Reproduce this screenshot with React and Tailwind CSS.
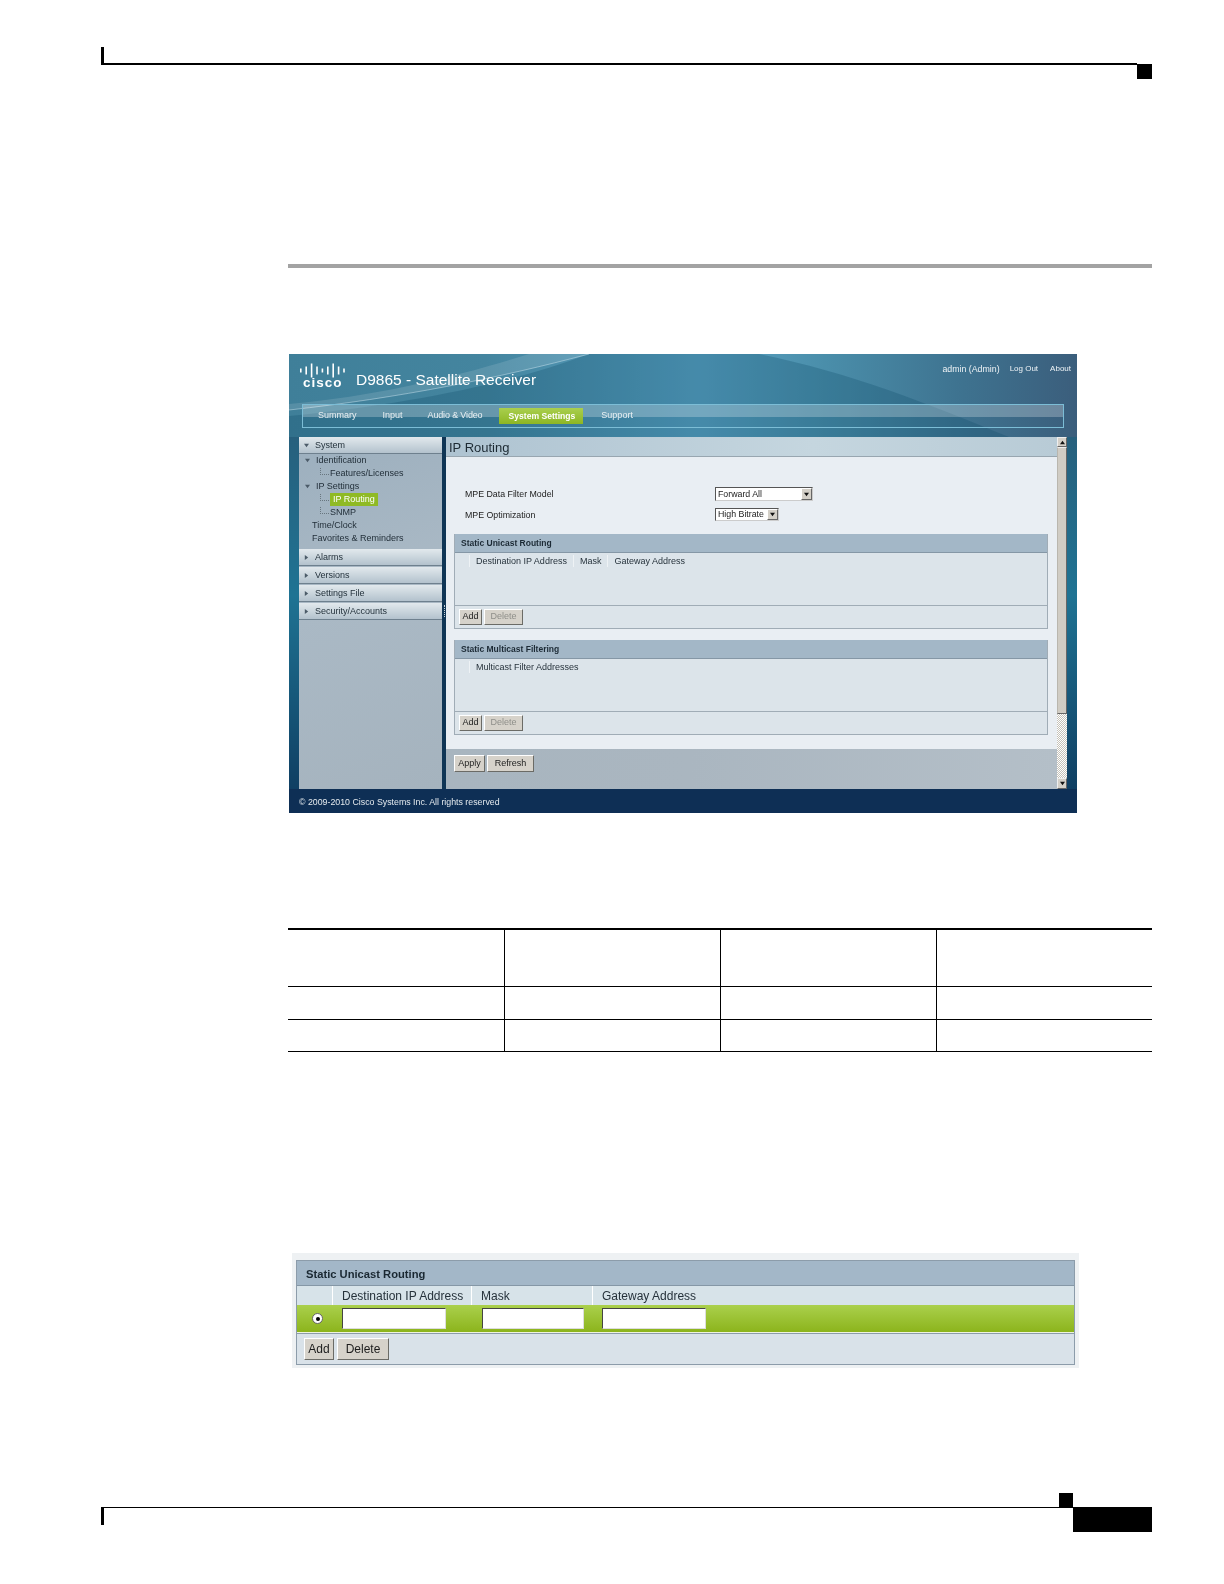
const navItems = ['Summary', 'Input', 'Audio & Video', 'System Settings', 'Support']

function Arrow({ dir = 'down', color = '#4b5b68', size = 5 }) {
  return (
    <svg width={size} height={size} viewBox="0 0 6 6" className="shrink-0">
      <path d={dir === 'down' ? 'M0 1h6L3 5z' : dir === 'up' ? 'M0 5h6L3 1z' : 'M1 0v6l4-3z'} fill={color} />
    </svg>
  )
}

function CiscoLogo() {
  const bars = [4, 8, 14, 8, 4, 8, 14, 8, 4]
  return (
    <div className="flex flex-col items-start">
      <svg width="46" height="15" viewBox="0 0 46 15">
        {bars.map((h, i) => (
          <rect key={i} x={i * 5.4 + 1} y={7.5 - h / 2} width="1.6" height={h} fill="#fff" />
        ))}
      </svg>
      <span className="ml-[4px] -mt-px text-[13.5px] leading-[12px] font-bold tracking-[1px] text-white">cisco</span>
    </div>
  )
}

function Banner() {
  return (
    <div className="relative h-[83px] overflow-hidden bg-[linear-gradient(90deg,#3f7f99_0%,#44859f_25%,#5ba3c4_52%,#4a8eaa_68%,#3e7390_85%,#3b5e7c_100%)]">
      {/* swoosh */}
      <svg className="absolute inset-0" width="788" height="83" viewBox="0 0 788 83">
        <path d="M0 83V62C120 50 220 30 300 0H470C560 18 640 50 720 83Z" fill="#0f4a68" opacity="0.28" />
        <path d="M0 56C110 44 210 24 300 0L240 0C170 22 90 42 0 50Z" fill="#fff" opacity="0.12" />
        <path d="M0 56C110 44 210 24 300 0" fill="none" stroke="#cfe6f0" strokeWidth="0.8" opacity="0.6" />
      </svg>
      <div className="relative flex h-[50px]">
        <div className="w-[67px] pl-[10px] pt-[9px]">
          <CiscoLogo />
        </div>
        <div className="flex-1 pt-[16px] text-[15.5px] leading-[20px] text-white">D9865 - Satellite Receiver</div>
        <div className="flex pr-[6px] pt-[9px] text-[8px] leading-[12px] text-[#eef3f6]">
          <span className="mr-[10px] text-[8.8px]">admin (Admin)</span>
          <span className="mr-[12px]">Log Out</span>
          <span>About</span>
        </div>
      </div>
      <nav className="relative ml-[13px] flex h-[24px] w-[762px] items-center gap-[6px] border border-[#7cbdd6] pl-[5px]">
        <div className="absolute inset-x-0 top-0 h-[12px] bg-white/25" />
        {navItems.map((item) => (
          <span
            key={item}
            className={`relative flex h-[16px] items-center ${
              item === 'System Settings'
                ? 'ml-px mr-[2px] bg-[linear-gradient(180deg,#a9cf4e,#8db624)] pl-[9px] pr-[8px] text-[8.6px] font-bold text-white'
                : item === 'Audio & Video'
                  ? '-ml-px px-[10px] text-[9px] tracking-[-0.15px] text-[#e9f0f3]'
                  : 'px-[10px] text-[9px] text-[#e9f0f3]'
            }`}
          >
            {item}
          </span>
        ))}
      </nav>
    </div>
  )
}

function SideHeader({ label, open }) {
  return (
    <div className="mb-px flex h-[17px] items-center gap-[6px] border-b border-[#6e808e] bg-[linear-gradient(180deg,#e2e9ed,#b3c2cd)] pl-[5px] pt-px text-[9px] text-[#24323c]">
      <Arrow dir={open ? 'down' : 'right'} />
      <span>{label}</span>
    </div>
  )
}

function TreeRow({ label, indent, arrow, connector, active }) {
  return (
    <div className={`flex h-[13px] items-center text-[9px] text-[#1f2c36] ${indent}`}>
      {arrow && (
        <span className="mr-[6px]">
          <Arrow />
        </span>
      )}
      {connector && <span className="mr-px mb-[5px] h-[7px] w-[9px] border-b border-l border-dotted border-[#68767f]" />}
      {active ? <span className="bg-[#8fba24] px-[3px] leading-[13px] text-white">{label}</span> : <span>{label}</span>}
    </div>
  )
}

function Sidebar() {
  return (
    <aside className="w-[143px] bg-[linear-gradient(160deg,#9cafbe,#aab9c5_45%,#a5b3be)]">
      <SideHeader label="System" open />
      <div className="-mt-px pb-[4px]">
        <TreeRow label="Identification" indent="pl-[6px]" arrow />
        <TreeRow label="Features/Licenses" indent="pl-[21px]" connector />
        <TreeRow label="IP Settings" indent="pl-[6px]" arrow />
        <TreeRow label="IP Routing" indent="pl-[21px]" connector active />
        <TreeRow label="SNMP" indent="pl-[21px]" connector />
        <TreeRow label="Time/Clock" indent="pl-[13px]" />
        <TreeRow label="Favorites & Reminders" indent="pl-[13px]" />
      </div>
      <SideHeader label="Alarms" />
      <SideHeader label="Versions" />
      <SideHeader label="Settings File" />
      <SideHeader label="Security/Accounts" />
    </aside>
  )
}

function Btn({ children, disabled, className = '' }) {
  return (
    <button
      className={`flex items-center justify-center border border-t-white border-l-white border-r-[#6b6b66] border-b-[#6b6b66] bg-[#d6d2ca] ${
        disabled ? 'text-[#8f8f8a]' : 'text-[#1c1c1c]'
      } ${className}`}
    >
      {children}
    </button>
  )
}

function SelectBox({ value, className }) {
  return (
    <div className={`flex items-center justify-between border border-t-[#555] border-l-[#555] border-r-[#ccc] border-b-[#ccc] bg-white pl-[2px] text-[8.8px] text-[#222] ${className}`}>
      <span className="pt-px">{value}</span>
      <span className="flex h-full w-[11px] items-center justify-center border border-t-white border-l-white border-r-[#666] border-b-[#666] bg-[#d4d0c8]">
        <Arrow color="#111" />
      </span>
    </div>
  )
}

function Section({ title, columns, className = '' }) {
  return (
    <section className={`ml-[8px] flex w-[594px] flex-col border border-t-0 border-[#a0acb6] bg-[#dce4ea] ${className}`}>
      <div className="flex h-[19px] shrink-0 items-center border-b border-[#8597a6] bg-[#a3b7c7] pl-[6px] pt-px text-[8.5px] font-bold text-[#1c2a35]">
        {title}
      </div>
      <div className="flex flex-1 items-start pt-[2px] text-[9px] leading-[12px] text-[#27333c]">
        <span className="h-[12px] w-[15px] border-r border-[#eef2f5]" />
        {columns.map((col) => (
          <span key={col} className="h-[12px] border-r border-[#eef2f5] px-[6px] last:border-r-0">
            {col}
          </span>
        ))}
      </div>
      <div className="flex h-[23px] shrink-0 items-center gap-[2px] border-t border-[#a0acb6] pl-[4px] text-[9px]">
        <Btn className="h-[16px] w-[23px]">Add</Btn>
        <Btn disabled className="h-[16px] w-[39px]">
          Delete
        </Btn>
      </div>
    </section>
  )
}

function MainPanel() {
  return (
    <main className="flex w-[611px] flex-col">
      <div className="flex h-[20px] items-center border-b border-[#98a6b0] bg-[linear-gradient(90deg,#aec3d1,#c5d6df_60%,#b8cbd6)] pl-[3px] pt-[2px] text-[13px] text-[#1d2a33]">
        IP Routing
      </div>
      <div className="h-[292px] bg-[#e9eef3] pt-[30px]">
        <div className="flex h-[14px] items-center pl-[19px]">
          <span className="w-[250px] pt-[2px] text-[8.8px] text-[#222]">MPE Data Filter Model</span>
          <SelectBox value="Forward All" className="h-[14px] w-[98px]" />
        </div>
        <div className="mt-[7px] flex h-[13px] items-center pl-[19px]">
          <span className="w-[250px] pt-[2px] text-[8.8px] text-[#222]">MPE Optimization</span>
          <SelectBox value="High Bitrate" className="h-[13px] w-[64px]" />
        </div>
        <Section className="mt-[13px] h-[95px]" title="Static Unicast Routing" columns={['Destination IP Address', 'Mask', 'Gateway Address']} />
        <Section className="mt-[11px] h-[95px]" title="Static Multicast Filtering" columns={['Multicast Filter Addresses']} />
      </div>
      <div className="flex h-[40px] items-start gap-[2px] bg-[linear-gradient(90deg,#a8b5bf,#aab6c0_40%,#b4bfc8)] pl-[8px] pt-[6px] text-[9px]">
        <Btn className="h-[17px] w-[31px]">Apply</Btn>
        <Btn className="h-[17px] w-[47px]">Refresh</Btn>
      </div>
    </main>
  )
}

function Scrollbar() {
  return (
    <div className="flex w-[10px] flex-col bg-[repeating-conic-gradient(#c4c1b9_0_25%,#ffffff_0_50%)] bg-[length:2px_2px]">
      <div className="flex h-[10px] items-center justify-center border border-t-[#eee] border-l-[#eee] border-r-[#666] border-b-[#666] bg-[#d4d0c8]">
        <Arrow dir="up" color="#111" />
      </div>
      <div className="h-[267px] border border-t-[#eee] border-l-[#b9b6ae] border-r-[#666] border-b-[#666] bg-[#d0ccc4]" />
      <div className="flex-1" />
      <div className="flex h-[11px] items-center justify-center border border-t-[#eee] border-l-[#eee] border-r-[#666] border-b-[#666] bg-[#d4d0c8]">
        <Arrow color="#111" />
      </div>
    </div>
  )
}

function ReceiverScreen() {
  return (
    <div className="ml-px flex h-[459px] w-[788px] flex-col overflow-hidden blur-[0.35px]">
      <Banner />
      <div className="flex h-[352px] bg-[linear-gradient(180deg,#27607d,#1f7393_45%,#0f3f63)] pl-[10px]">
        <Sidebar />
        <div className="flex w-[4px] flex-col items-center justify-end bg-[#0f3555]">
          <div className="mb-[172px] h-[12px] border-l border-dotted border-[#c6d2da]" />
        </div>
        <MainPanel />
        <Scrollbar />
      </div>
      <div className="flex h-[24px] items-center bg-[#0e2f55] pl-[10px] pt-[3px] text-[8.8px] text-[#e4eaee]">
        © 2009-2010 Cisco Systems Inc. All rights reserved
      </div>
    </div>
  )
}

function EmptyTable() {
  const rows = ['h-[57px]', 'h-[33px]', 'h-[32px]']
  return (
    <div className="mt-[115px] w-[864px] border-t-2 border-black">
      {rows.map((h) => (
        <div key={h} className={`grid grid-cols-4 border-b border-black ${h}`}>
          <div />
          <div className="border-l border-black" />
          <div className="border-l border-black" />
          <div className="border-l border-black" />
        </div>
      ))}
    </div>
  )
}

function RoutingEditor() {
  return (
    <div className="mt-[201px] ml-[4px] h-[115px] w-[787px] bg-[#eef1f3] px-[4px] pt-[7px] blur-[0.3px]">
      <div className="flex h-[105px] flex-col border border-[#8c9caa] bg-[#d9e2e9]">
        <div className="flex h-[25px] shrink-0 items-center border-b border-[#8597a6] bg-[#a3b7c8] pl-[9px] pt-[2px] text-[11.2px] font-bold text-[#1a2832]">
          Static Unicast Routing
        </div>
        <div className="flex h-[19px] shrink-0 items-center bg-[#d7e3e9] text-[12px] text-[#26323b]">
          <span className="h-full w-[36px] border-r border-white" />
          <span className="flex h-full w-[139px] items-center border-r border-white pl-[9px]">Destination IP Address</span>
          <span className="flex h-full w-[121px] items-center border-r border-white pl-[9px]">Mask</span>
          <span className="pl-[9px]">Gateway Address</span>
        </div>
        <div className="flex h-[28px] shrink-0 items-center border-b border-[#eef3e0] bg-[linear-gradient(180deg,#aad04c,#8cb41c)]">
          <span className="flex h-full w-[36px] items-center justify-center pl-[5px]">
            <span className="flex h-[11px] w-[11px] items-center justify-center rounded-full border border-[#666] bg-white">
              <span className="h-[4px] w-[4px] rounded-full bg-black" />
            </span>
          </span>
          <span className="ml-[9px] h-[21px] w-[104px] border border-t-[#444] border-l-[#444] border-r-[#ddd] border-b-[#ddd] bg-white" />
          <span className="ml-[36px] h-[21px] w-[102px] border border-t-[#444] border-l-[#444] border-r-[#ddd] border-b-[#ddd] bg-white" />
          <span className="ml-[18px] h-[21px] w-[104px] border border-t-[#444] border-l-[#444] border-r-[#ddd] border-b-[#ddd] bg-white" />
        </div>
        <div className="flex flex-1 items-center gap-[3px] border-t border-[#8c9caa] pl-[7px] text-[12px]">
          <Btn className="h-[22px] w-[30px]">Add</Btn>
          <Btn className="h-[22px] w-[52px]">Delete</Btn>
        </div>
      </div>
    </div>
  )
}

export default function App() {
  return (
    <div className="flex h-[1584px] w-[1224px] flex-col bg-white [font-family:'Liberation_Sans',Arial,sans-serif]">
      {/* Page header */}
      <header className="ml-[101px] w-[1051px] pt-[47px]">
        <div className="flex h-[32px] items-start">
          <div className="h-[18px] flex-1 border-b-2 border-l-[3px] border-black" />
          <div className="mt-[17px] h-[15px] w-[15px] bg-black" />
        </div>
      </header>

      <div className="ml-[288px] w-[864px]">
        <div className="mt-[185px] h-[4px] bg-[#a3a3a3]" />
        <div className="mt-[86px]">
          <ReceiverScreen />
        </div>
        <EmptyTable />
        <RoutingEditor />
      </div>

      {/* Page footer */}
      <footer className="mt-auto mb-[52px] ml-[101px] flex w-[1051px] items-start">
        <div className="flex-1">
          <div className="ml-auto h-[14px] w-[14px] bg-black" />
          <div className="h-[18px] border-t border-l-[3px] border-black" />
        </div>
        <div className="mt-[14px] h-[25px] w-[79px] bg-black" />
      </footer>
    </div>
  )
}
